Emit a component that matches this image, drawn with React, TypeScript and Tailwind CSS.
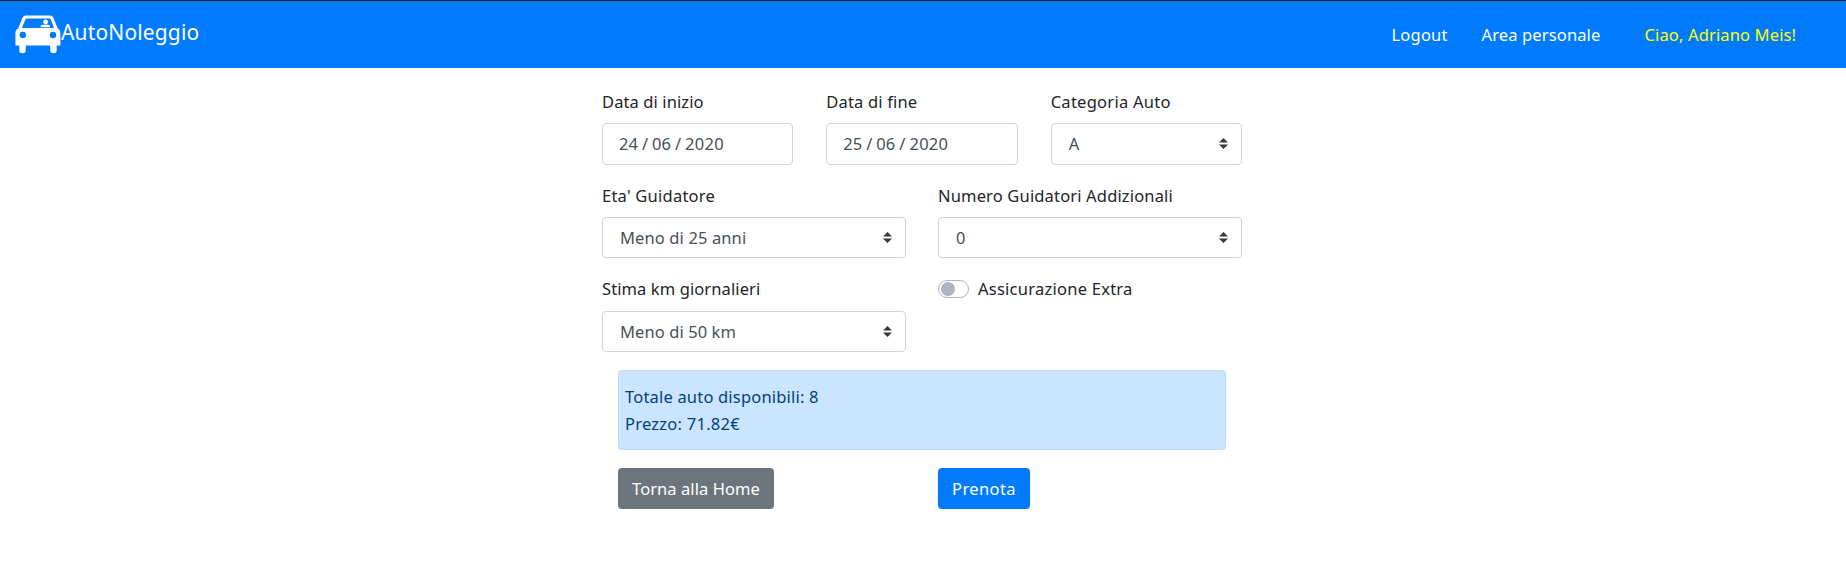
import React from "react";

function CarLogo() {
  return (
    <svg className="h-[39px] w-[46px] shrink-0" viewBox="0 0 46 39" fill="none">
      <path
        fill="#fff"
        fillRule="evenodd"
        d="M11 .4H35C37 .4 37.8 1.2 38.5 3L42.6 13.2C44.4 14.4 45.4 16 45.4 18V30.5H41.7V35A3.2 3.2 0 0 1 35.2 35V30.5H10.8V35A3.2 3.2 0 0 1 4.3 35V30.5H.4V18C.4 16 1.2 14.4 3.3 13.2L7.4 3C8.1 1.2 9 .4 11 .4ZM11.6 3.6C10.9 3.6 10.6 3.9 10.4 4.5L7 12.9H39L35.8 4.5C35.6 3.9 35.3 3.6 34.6 3.6ZM7.8 16.8A3.2 3.2 0 1 0 7.8 23.2A3.2 3.2 0 1 0 7.8 16.8ZM38 16.8A3.2 3.2 0 1 0 38 23.2A3.2 3.2 0 1 0 38 16.8Z"
      />
      <circle cx="30.6" cy="7" r="2.4" fill="#fff" />
      <path fill="#fff" d="M25.6 12.2V11.4Q25.6 9.7 27.3 9.7H33.4Q35.1 9.7 35.1 11.4V12.2Z" />
    </svg>
  );
}

function Arrows() {
  return (
    <svg className="h-[11px] w-[9px] shrink-0" viewBox="0 0 4 5" preserveAspectRatio="none">
      <path fill="#343a40" d="M2 0L0 2h4zm0 5L0 3h4z" />
    </svg>
  );
}

const box = "flex items-center rounded-[4px] border border-[#ced4da] bg-white text-[#495057]";

function Label({ children, className }: { children: string; className: string }) {
  return <label className={`block h-[27px] whitespace-nowrap leading-[27px] ${className}`}>{children}</label>;
}

function Select({ value, className }: { value: string; className: string }) {
  return (
    <div className={`${box} justify-between pl-[17px] pr-[13px] ${className}`}>
      <span>{value}</span>
      <Arrows />
    </div>
  );
}

function DateBox({ day, month, year }: { day: string; month: string; year: string }) {
  return (
    <div className={`${box} mt-[8px] h-[42px] pb-px pl-[16px]`}>
      <span>{day}</span>
      <span className="ml-[4px]">/</span>
      <span className="ml-[4px]">{month}</span>
      <span className="ml-[4px]">/</span>
      <span className="ml-[4px] tracking-[0.3px]">{year}</span>
    </div>
  );
}

export default function App() {
  return (
    <div className="min-h-[573px] bg-white font-['Noto_Sans',sans-serif] text-[16.5px] leading-[27px] text-[#212529]">
      <nav className="flex h-[68px] items-start border-t border-[#212529] bg-[#007bff] pl-[15px] text-white">
        <div className="flex pt-[14px]">
          <CarLogo />
          <span className="mt-px text-[21px] leading-[32px] tracking-[0.15px]">AutoNoleggio</span>
        </div>
        <div className="ml-auto flex whitespace-nowrap pr-[50px] pt-[20px]">
          <a className="w-[90px] tracking-[0.2px]">Logout</a>
          <a className="w-[163px] tracking-[0.135px]">Area personale</a>
          <a className="w-[151.5px] tracking-[0.14px] text-[#ffff00]">Ciao, Adriano Meis!</a>
        </div>
      </nav>

      <div className="flex justify-center pr-[2px]">
        <main className="w-[642px] pt-[20px]">
          <div className="grid grid-cols-3 gap-x-[33px] px-px">
            <div>
              <Label className="tracking-[0.1px]">Data di inizio</Label>
              <DateBox day="24" month="06" year="2020" />
            </div>
            <div>
              <Label className="tracking-[0.17px]">Data di fine</Label>
              <DateBox day="25" month="06" year="2020" />
            </div>
            <div>
              <Label className="tracking-[0.27px]">Categoria Auto</Label>
              <Select value="A" className="mt-[8px] h-[42px] pb-px" />
            </div>
          </div>

          <div className="mt-[17px] grid grid-cols-2 gap-x-[32px] px-px">
            <div>
              <Label className="tracking-[0.23px]">Eta' Guidatore</Label>
              <Select value="Meno di 25 anni" className="mt-[8px] h-[41px] tracking-[0.12px]" />
            </div>
            <div>
              <Label className="tracking-[0.16px]">Numero Guidatori Addizionali</Label>
              <Select value="0" className="mt-[8px] h-[41px]" />
            </div>
          </div>

          <div className="mt-[17px] grid grid-cols-2 gap-x-[32px] px-px">
            <div>
              <Label className="tracking-[0.1px]">Stima km giornalieri</Label>
              <Select value="Meno di 50 km" className="mt-[9px] h-[41px] tracking-[0.09px]" />
            </div>
            <div className="flex h-[27px] items-center">
              <div className="flex h-[18px] w-[31px] items-center rounded-full border border-[#adb5bd] pl-[2px]">
                <div className="size-[14px] rounded-full bg-[#adb5bd]" />
              </div>
              <span className="ml-[9px] tracking-[0.25px]">Assicurazione Extra</span>
            </div>
          </div>

          <div className="mx-[17px] mt-[18px] h-[80px] rounded-[4px] border border-[#b8daff] bg-[#cce5ff] px-[6px] pt-[12px] text-[#004085]">
            <p className="tracking-[0.19px]">Totale auto disponibili: 8</p>
            <p className="tracking-[0.25px]">Prezzo: 71.82€</p>
          </div>

          <div className="mt-[18px] flex pl-[17px] text-white">
            <div className="w-[320px]">
              <button className="h-[41px] w-[156px] whitespace-nowrap rounded-[4px] bg-[#6c757d] tracking-[0.07px]">Torna alla Home</button>
            </div>
            <button className="h-[41px] w-[92px] rounded-[4px] bg-[#007bff] tracking-[0.4px]">Prenota</button>
          </div>
        </main>
      </div>
    </div>
  );
}
